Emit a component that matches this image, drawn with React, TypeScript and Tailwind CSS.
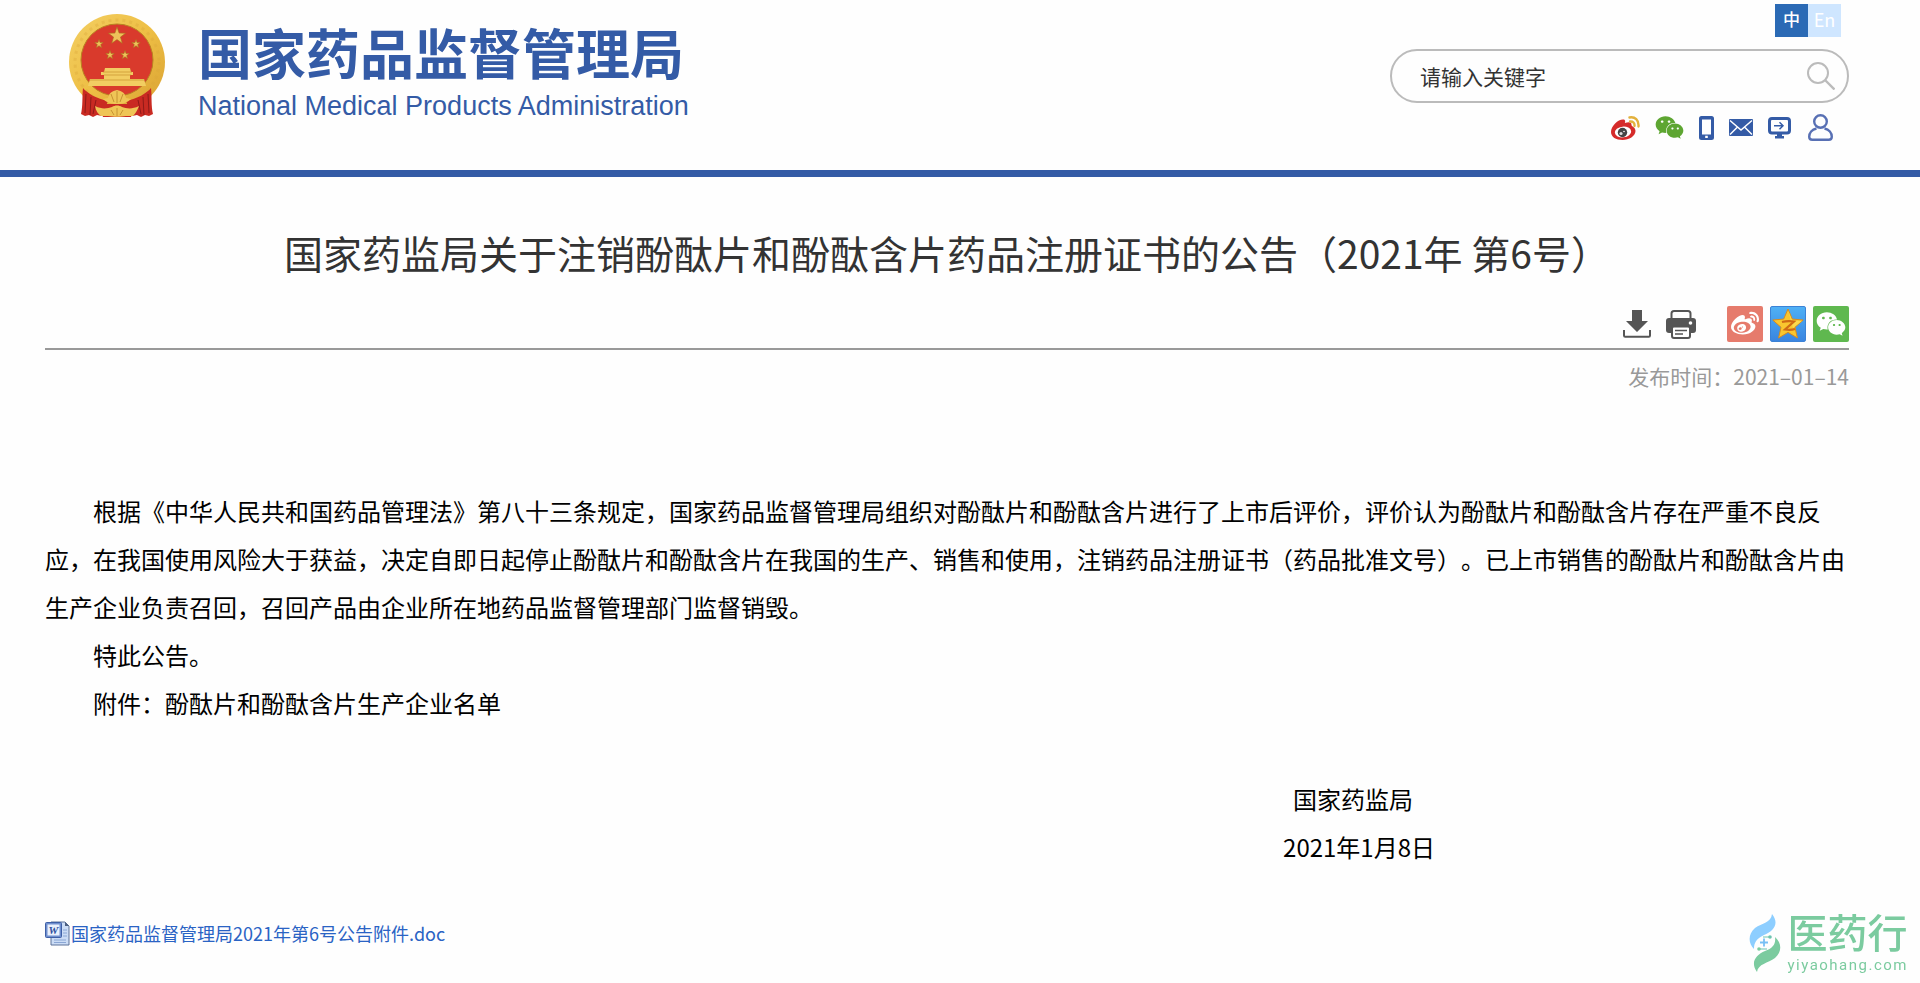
import { FaWeibo, FaWeixin } from "react-icons/fa";

function starPoints(cx: number, cy: number, r: number, inner = 0.4) {
  return Array.from({ length: 10 }, (_, i) => {
    const radius = i % 2 === 0 ? r : r * inner;
    const angle = (Math.PI / 5) * i - Math.PI / 2;
    return `${cx + radius * Math.cos(angle)},${cy + radius * Math.sin(angle)}`;
  }).join(" ");
}

function Emblem() {
  return (
    <svg viewBox="0 0 96 104" className="h-[104px] w-24 shrink-0" aria-hidden="true">
      <defs>
        <linearGradient id="gold" x1="0" y1="0" x2="1" y2="1">
          <stop offset="0" stopColor="#f3cf63" />
          <stop offset="0.5" stopColor="#eebf45" />
          <stop offset="1" stopColor="#d9a132" />
        </linearGradient>
      </defs>
      <circle cx="48" cy="48" r="48" fill="url(#gold)" />
      <circle cx="48" cy="48" r="42" fill="none" stroke="#dba638" strokeWidth="3" strokeDasharray="3 4" opacity="0.35" />
      <circle cx="48" cy="46" r="36" fill="#d93a2c" stroke="#b98222" strokeWidth="1" />
      <g fill="#eec25a" stroke="#a86f1c" strokeWidth="0.6">
        <polygon points={starPoints(48, 22, 9)} />
        <polygon points={starPoints(30, 30, 4.5)} />
        <polygon points={starPoints(67, 30, 4.5)} />
        <polygon points={starPoints(41, 41, 4.5)} />
        <polygon points={starPoints(56, 41, 4.5)} />
      </g>
      {/* gate tower */}
      <path d="M36 54h25l1 4h2v3H61v4h14l2 7H19l2-7h14v-4h-3v-3h3z" fill="#f2cd62" />
      <path d="M34 58h29M35 61h27M20 66h56" stroke="#c8922f" strokeWidth="0.7" fill="none" />
      {/* drapes */}
      <path d="M14 74c4 5 14 11 25 13l-6 15-5-1-4 2-4-2-4 1-4-2c2-8 1-17 2-26z" fill="#c92a22" />
      <path d="M82 74c-4 5-14 11-25 13l6 15 5-1 4 2 4-2 4 1 4-2c-2-8-1-17-2-26z" fill="#c92a22" />
      <path d="M30 90h36l-4 13H34z" fill="#c92a22" />
      <path d="M17 80l-1 19M22 83l-1 18M27 86l-3 14M79 80l1 19M74 83l1 18M69 86l3 14" stroke="#8f1a18" strokeWidth="1" fill="none" />
      <path d="M39 84c1-5 4-7 9-8 5 1 8 3 9 8l5 1c-4 4-9 5-14 5s-10-1-14-5z" fill="#efc556" />
      <path d="M26 92c8 4 13 2 17 1 3-2 7-2 10 0 4 1 9 3 17-1-2 5-4 8-6 10H57c-5 1-13 1-18 0h-7c-3-2-5-5-6-10z" fill="#efc556" />
      <path d="M48 77v12M42 80l3 8M54 80l-3 8M48 94v8M42 96l3 5M54 96l-3 5" stroke="#bd8528" strokeWidth="0.8" fill="none" />
    </svg>
  );
}

function WeiboIcon() {
  return (
    <svg viewBox="0 0 29 24" className="h-6 w-[29px]" aria-hidden="true">
      <path d="M0 16C0 10 7 3.500 12 3.500c2.500 0 2.500 2 1.800 3.500 4-1.500 7-1.200 6.700 2-.2 1.500 4 2 4 6C24.500 20 18 24 11.500 24 5 24 0 21 0 16z" fill="#d52b2a" />
      <ellipse cx="12" cy="16" rx="8.200" ry="5.400" fill="#fff" transform="rotate(-6 12 16)" />
      <circle cx="11.500" cy="16.500" r="4.700" fill="#444" />
      <circle cx="10" cy="17.500" r="1.600" fill="#ddd" />
      <circle cx="13" cy="15.500" r="0.800" fill="#fff" />
      <path d="M18.500 1.500C24 .5 28 4 27.500 10.500M19 5.500c3-.3 4.800 1.500 4.500 4.500" fill="none" stroke="#e3b13d" strokeWidth="2.400" strokeLinecap="round" />
    </svg>
  );
}

function PhoneIcon() {
  return (
    <svg viewBox="0 0 15 24" className="h-6 w-[15px]" aria-hidden="true">
      <path fillRule="evenodd" d="M2.500 0h10A2.500 2.500 0 0 1 15 2.500v19a2.500 2.500 0 0 1-2.500 2.500h-10A2.500 2.500 0 0 1 0 21.500v-19A2.500 2.500 0 0 1 2.500 0zM3 3.500v15h9v-15zm3.200 16.200v2.400h2.600v-2.400z" fill="#345ba6" />
    </svg>
  );
}

function MailIcon() {
  return (
    <svg viewBox="0 0 24 17" className="h-[17px] w-6" aria-hidden="true">
      <rect width="24" height="17" rx="1" fill="#345ba6" />
      <path d="M1 1.500l11 9.500 11-9.500M1 15.500l7.500-7.500M23 15.500L15.500 8" fill="none" stroke="#fff" strokeWidth="1.500" />
    </svg>
  );
}

function MonitorIcon() {
  return (
    <svg viewBox="0 0 25 22" className="h-[22px] w-[25px]" aria-hidden="true">
      <rect x="1.500" y="1.500" width="20" height="14.500" rx="2.500" fill="none" stroke="#345ba6" strokeWidth="3" />
      <path d="M6 8.700h9M11.500 5.200l3.500 3.500-3.500 3.500" fill="none" stroke="#345ba6" strokeWidth="1.500" />
      <path d="M9 16h5v3h2v2.500H7V19h2z" fill="#345ba6" />
    </svg>
  );
}

function UserIcon() {
  return (
    <svg viewBox="0 0 25 27" className="h-[27px] w-[25px]" aria-hidden="true">
      <g fill="none" stroke="#5870b4" strokeWidth="2.400">
        <circle cx="12.500" cy="7.500" r="6.300" />
        <path d="M8.500 14.500C4 15.500 1.200 19 1.200 22.800c0 2 1 3 3 3h16.600c2 0 3-1 3-3 0-3.800-2.800-7.300-7.300-8.300" />
      </g>
    </svg>
  );
}

function DownloadIcon() {
  return (
    <svg viewBox="0 0 28 28" className="size-7" aria-hidden="true">
      <path d="M9 0h10v11h6L14 22 3 11h6z" fill="#555" />
      <path d="M1 20v5.500c0 .8.500 1.200 1.200 1.200h23.600c.7 0 1.200-.4 1.200-1.200V20" fill="none" stroke="#555" strokeWidth="2" />
    </svg>
  );
}

function PrinterIcon() {
  return (
    <svg viewBox="0 0 30 29" className="h-[29px] w-[30px]" aria-hidden="true">
      <path d="M5.500 9V3.500c0-1.500 1-2.500 2.500-2.500h14c1.500 0 2.500 1 2.500 2.500V9" fill="none" stroke="#555" strokeWidth="2" />
      <path d="M3 8h24a3 3 0 0 1 3 3v9a3 3 0 0 1-3 3H3a3 3 0 0 1-3-3v-9a3 3 0 0 1 3-3z" fill="#555" />
      <circle cx="24.500" cy="13" r="1.800" fill="#fff" />
      <rect x="6" y="16.500" width="18" height="11.500" rx="2" fill="#fff" stroke="#555" strokeWidth="2" />
      <path d="M9 20.500h12M9 24h8" stroke="#555" strokeWidth="1.600" />
    </svg>
  );
}

function QzoneIcon() {
  return (
    <svg viewBox="0 0 34 34" className="size-full" aria-hidden="true">
      <polygon points={starPoints(17, 18, 16, 0.46)} fill="#f9c62f" stroke="#d98b1c" strokeWidth="1" strokeLinejoin="round" />
      <path d="M17 3l4 10.500 10 .5-9 7z" fill="#fde15a" opacity="0.7" />
      <path d="M11 15c4-1 8-1 12-.5l-9 8c4 .6 7 .5 10-.5" fill="none" stroke="#cf6a14" strokeWidth="2.200" />
    </svg>
  );
}

function WordIcon() {
  return (
    <svg viewBox="0 0 25 25" className="size-[25px] shrink-0" aria-hidden="true">
      <path d="M6 1h14l4 4v19H6z" fill="#cbdcf5" stroke="#5d7399" strokeWidth="1" />
      <path d="M20 1v4h4z" fill="#4c5f80" />
      <path d="M9 19h12M9 21.500h12M18 9h4M18 12h4M18 15h4" stroke="#8aa6d4" strokeWidth="1" />
      <rect x="0.500" y="1.500" width="16" height="15" rx="1" fill="#6f8fce" stroke="#3e5fa6" />
      <rect x="2.500" y="3.500" width="12" height="11" fill="#e9f0fc" />
      <text x="8.500" y="13" textAnchor="middle" fontFamily="Liberation Serif, serif" fontSize="11" fontWeight="700" fontStyle="italic" fill="#2d4f9e">W</text>
    </svg>
  );
}

function Watermark() {
  return (
    <div className="pointer-events-none fixed right-3 bottom-2.5 flex items-center gap-1.5">
      <svg viewBox="0 0 32 58" className="h-[58px] w-8" aria-hidden="true">
        <path d="M23 0C31 10 24 17 15 21 7 25 5 29 5 35-1 29-1 20 6 14 13 9 22 9 23 0z" fill="#8dceff" />
        <path d="M8 58C1 48 7 41 16 37c8-3 11-7 10-14 7 6 7 15 0 21-7 5-17 6-18 14z" fill="#7bcb9f" />
        <path d="M11 28.500h8M15 24.500v8" stroke="#78bff5" strokeWidth="1.800" />
        <path d="M14 23h7M10 35h8" stroke="#6cc4b0" strokeWidth="1.200" />
        <circle cx="21" cy="23" r="1.800" fill="#6cc4b0" />
        <circle cx="10" cy="35" r="1.800" fill="#7bcb9f" />
      </svg>
      <div className="font-['Roboto','Noto_Sans_CJK_SC',sans-serif] text-[#7bcb9f]">
        <p className="text-[40px] leading-[44px] font-medium">医药行</p>
        <p className="text-[15px] leading-4 tracking-widest">yiyaohang.com</p>
      </div>
    </div>
  );
}

export default function App() {
  return (
    <div className="min-h-screen bg-[#fefefe] font-['Noto_Sans_CJK_SC',sans-serif] text-black [text-spacing-trim:space-all]">
      {/* Header */}
      <header className="flex justify-between border-b-[7px] border-[#345ba6] pr-[71px] pb-7 pl-[69px]">
        <a href="#" className="flex items-start gap-[33px] pt-3.5">
          <Emblem />
          <div className="pt-2.5 text-[#345ba6]">
            <div className="text-[54px] leading-[56px] font-bold">国家药品监督管理局</div>
            <div className="mt-2.5 font-['Liberation_Sans',sans-serif] text-[27px] leading-8">
              National Medical Products Administration
            </div>
          </div>
        </a>

        <div className="flex flex-col items-end pt-1">
          <div className="mr-2 flex text-[18px] text-white">
            <button type="button" className="size-[33px] bg-[#2b6ab5] pb-1 text-[17px] leading-7 font-medium">中</button>
            <button type="button" className="size-[33px] bg-[#cfe6ff] pb-1 leading-7">En</button>
          </div>
          <form className="mt-3 flex h-[54px] w-[459px] items-center rounded-full border-2 border-[#bbb] pr-3 pl-7">
            <input
              type="text"
              aria-label="请输入关键字"
              placeholder="请输入关键字"
              className="min-w-0 flex-1 bg-transparent text-[21px] leading-8 outline-none placeholder:text-[#333]"
            />
            <button type="submit" aria-label="搜索">
              <svg viewBox="0 0 28 28" className="size-7" fill="none" stroke="#bbb" strokeWidth="2" aria-hidden="true">
                <circle cx="11" cy="11" r="10" />
                <path d="M18 18l9.500 9.500" strokeWidth="2.400" />
              </svg>
            </button>
          </form>
          <nav className="mt-2.5 mr-4 flex items-center gap-[15px]">
            <a href="#" aria-label="微博"><WeiboIcon /></a>
            <a href="#" aria-label="微信"><FaWeixin className="size-[29px] text-[#5ea632]" /></a>
            <a href="#" aria-label="手机版"><PhoneIcon /></a>
            <a href="#" aria-label="邮箱"><MailIcon /></a>
            <a href="#" aria-label="电脑版"><MonitorIcon /></a>
            <a href="#" aria-label="个人中心"><UserIcon /></a>
          </nav>
        </div>
      </header>

      {/* Article */}
      <main className="pt-[45px] pr-[71px] pb-6 pl-[45px]">
        <h1 className="text-center text-[39px] leading-[60px] text-[#333]">
          国家药监局关于注销酚酞片和酚酞含片药品注册证书的公告（2021年 第6号）
        </h1>

        <div className="mt-6 flex items-center justify-end gap-[7px] border-b-2 border-[#999] pb-1.5">
          <button type="button" aria-label="下载" className="mr-2"><DownloadIcon /></button>
          <button type="button" aria-label="打印" className="mr-6"><PrinterIcon /></button>
          <button type="button" aria-label="分享到微博" className="flex size-9 items-center justify-center rounded-xs bg-[#e67b6c] text-white">
            <FaWeibo className="size-7" />
          </button>
          <button type="button" aria-label="分享到QQ空间" className="size-9 rounded-xs border border-[#3b82d6] bg-linear-to-b from-[#4fb0f5] to-[#3a85e0]">
            <QzoneIcon />
          </button>
          <button type="button" aria-label="分享到微信" className="flex size-9 items-center justify-center rounded-xs bg-[#5fb84f] text-white">
            <FaWeixin className="size-[30px]" />
          </button>
        </div>

        <p className="mt-2.5 text-right text-[21px] leading-8 text-[#999]">发布时间：2021–01–14</p>

        <article className="mt-[95px] text-2xl leading-[48px]">
          <p className="indent-12">
            根据《中华人民共和国药品管理法》第八十三条规定，国家药品监督管理局组织对酚酞片和酚酞含片进行了上市后评价，评价认为酚酞片和酚酞含片存在严重不良反应，在我国使用风险大于获益，决定自即日起停止酚酞片和酚酞含片在我国的生产、销售和使用，注销药品注册证书（药品批准文号）。已上市销售的酚酞片和酚酞含片由生产企业负责召回，召回产品由企业所在地药品监督管理部门监督销毁。
          </p>
          <p className="indent-12">特此公告。</p>
          <p className="indent-12">附件：酚酞片和酚酞含片生产企业名单</p>
          <div className="mt-12 mr-[414px] flex justify-end">
            <div>
              <p className="pl-2.5">国家药监局</p>
              <p>2021年1月8日</p>
            </div>
          </div>
        </article>

        <a href="#" className="mt-12 inline-flex items-center gap-px text-[18px] leading-7 text-[#2a63c4]">
          <WordIcon />
          国家药品监督管理局2021年第6号公告附件.doc
        </a>
      </main>

      <Watermark />
    </div>
  );
}
